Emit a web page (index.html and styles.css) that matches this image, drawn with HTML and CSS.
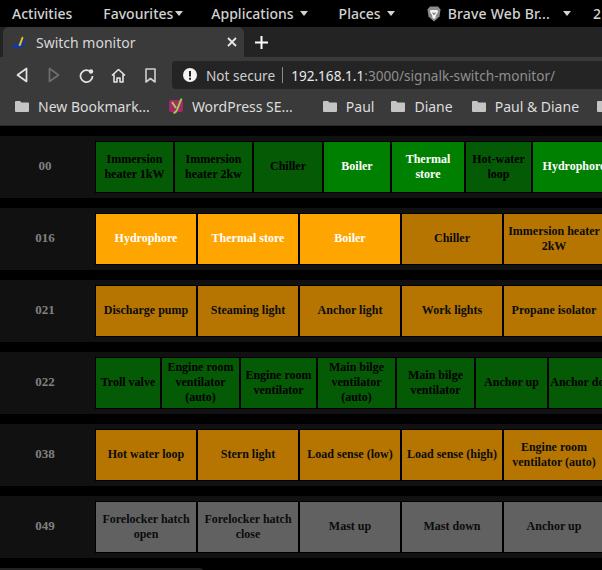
FILE: index.html
```html
<!DOCTYPE html>
<html>
<head>
  <title>Switch monitor</title>
  <link rel="stylesheet" href="styles.css">
</head>
<body>
  <div class="topbar">
    <span class="menu menu-activities">Activities</span>
    <span class="menu menu-favourites">Favourites<i class="caret caret-tight"></i></span>
    <span class="menu menu-applications">Applications<i class="caret"></i></span>
    <span class="menu menu-places">Places<i class="caret"></i></span>
    <svg class="brave" width="14" height="16" viewBox="0 0 14 16">
      <path d="M3 0.5h8l2.5 3-1 7-5.5 5-5.5-5-1-7z" fill="#8c8c8c"/>
      <path d="M3.5 4h7l0.5 2-2 3-0.5 3-1.5 1-1.5-1-0.5-3-2-3z" fill="#f2f2f2"/>
      <path d="M5 6.5h1.2l0.8 1 0.8-1h1.2l-1.4 2.2h-1.2z" fill="#777"/>
    </svg>
    <span class="menu menu-brave">Brave Web Br...<i class="caret caret-wide"></i></span>
    <span class="menu menu-clock">2</span>
  </div>

  <div class="tabstrip">
    <div class="tab">
      <svg class="favicon" width="16" height="13" viewBox="0 0 16 13">
        <path d="M0 10.500c2-2 5-3.500 8-4.500l7.500-1.500c-2 3.500-5 7-9.500 8-2.500.5-4.500 0-6-2z" fill="#123a9c"/>
        <path d="M6.500 9.500L10 .5l1.500 1-3 8.500z" fill="#f2c418"/>
      </svg>
      <span class="tab-title">Switch monitor</span>
      <svg class="tab-close" width="10" height="10" viewBox="0 0 10 10">
        <path d="M1 1l8 8M9 1l-8 8" stroke="#e8e8e8" stroke-width="1.800"/>
      </svg>
    </div>
    <svg class="tab-new" width="13" height="13" viewBox="0 0 13 13">
      <path d="M6.500 0v13M0 6.500h13" stroke="#fff" stroke-width="2"/>
    </svg>
  </div>

  <div class="toolbar">
    <svg class="nav nav-back" width="12" height="16" viewBox="0 0 12 16">
      <path d="M10.500 1.500v13L1.500 8z" fill="none" stroke="#e4e4e4" stroke-width="1.700" stroke-linejoin="round"/>
    </svg>
    <svg class="nav nav-forward" width="12" height="16" viewBox="0 0 12 16">
      <path d="M1.500 1.500v13l9-6.500z" fill="none" stroke="#6e6e6e" stroke-width="1.700" stroke-linejoin="round"/>
    </svg>
    <svg class="nav nav-reload" width="15" height="15" viewBox="0 0 15 15">
      <path d="M12.300 4.500A6 6 0 1 0 13.500 8" fill="none" stroke="#e4e4e4" stroke-width="1.700"/>
      <circle cx="12" cy="3.500" r="2.200" fill="#e4e4e4"/>
    </svg>
    <svg class="nav nav-home" width="15" height="15" viewBox="0 0 15 15">
      <path d="M1 7.500L7.500 1.500 14 7.500M3 6.500V14h3v-4h3v4h3V6.500" fill="none" stroke="#e4e4e4" stroke-width="1.600" stroke-linejoin="round"/>
    </svg>
    <svg class="nav nav-bookmark" width="11" height="15" viewBox="0 0 11 15">
      <path d="M1 1h9v13L5.500 10.500 1 14z" fill="none" stroke="#d0d0d0" stroke-width="1.600" stroke-linejoin="round"/>
    </svg>
    <div class="omnibox">
      <svg class="warn" width="14" height="14" viewBox="0 0 14 14">
        <path fill-rule="evenodd" d="M7 0a7 7 0 1 1 0 14A7 7 0 0 1 7 0zM6 3v5.500h2V3zM6 9.800v1.900h2V9.800z" fill="#f4f4f4"/>
      </svg>
      <span class="not-secure">Not secure</span>
      <span class="omni-divider"></span>
      <span class="url">192.168.1.1<span class="url-path">:3000/signalk-switch-monitor/</span></span>
    </div>
  </div>

  <div class="bookmarks">
    <svg class="folder folder-first" width="14" height="11" viewBox="0 0 14 11"><path d="M0 1a1 1 0 0 1 1-1h4l1.500 1.500H13a1 1 0 0 1 1 1V10a1 1 0 0 1-1 1H1a1 1 0 0 1-1-1z" fill="#c4c4c4"/></svg>
    <span class="mark mark-new">New Bookmark...</span>
    <svg class="yoast" width="15" height="16" viewBox="0 0 15 16">
      <rect x="0" y="2" width="14" height="12" rx="2" fill="#a4286a"/>
      <path d="M3 4l4 6M12.500 0.500L8 12c-.5 1.500-1.500 2.500-3.500 3" fill="none" stroke="#9fd24a" stroke-width="2"/>
    </svg>
    <span class="mark mark-wp">WordPress SE...</span>
    <svg class="folder folder-paul" width="14" height="11" viewBox="0 0 14 11"><path d="M0 1a1 1 0 0 1 1-1h4l1.500 1.500H13a1 1 0 0 1 1 1V10a1 1 0 0 1-1 1H1a1 1 0 0 1-1-1z" fill="#c4c4c4"/></svg>
    <span class="mark mark-paul">Paul</span>
    <svg class="folder folder-diane" width="14" height="11" viewBox="0 0 14 11"><path d="M0 1a1 1 0 0 1 1-1h4l1.500 1.500H13a1 1 0 0 1 1 1V10a1 1 0 0 1-1 1H1a1 1 0 0 1-1-1z" fill="#c4c4c4"/></svg>
    <span class="mark mark-diane">Diane</span>
    <svg class="folder folder-both" width="14" height="11" viewBox="0 0 14 11"><path d="M0 1a1 1 0 0 1 1-1h4l1.500 1.500H13a1 1 0 0 1 1 1V10a1 1 0 0 1-1 1H1a1 1 0 0 1-1-1z" fill="#c4c4c4"/></svg>
    <span class="mark mark-both">Paul &amp; Diane</span>
    <svg class="folder folder-last" width="14" height="11" viewBox="0 0 14 11"><path d="M0 1a1 1 0 0 1 1-1h4l1.500 1.500H13a1 1 0 0 1 1 1V10a1 1 0 0 1-1 1H1a1 1 0 0 1-1-1z" fill="#c4c4c4"/></svg>
  </div>

  <main class="monitor">
    <section class="device device-00">
      <div class="address">00</div>
      <div class="switches">
        <div class="switch green off">Immersion heater 1kW</div>
        <div class="switch green off">Immersion heater 2kw</div>
        <div class="switch green off">Chiller</div>
        <div class="switch green on">Boiler</div>
        <div class="switch green on">Thermal store</div>
        <div class="switch green off">Hot-water loop</div>
        <div class="switch green on">Hydrophore</div>
      </div>
    </section>
    <section class="device">
      <div class="address">016</div>
      <div class="switches">
        <div class="switch orange on">Hydrophore</div>
        <div class="switch orange on">Thermal store</div>
        <div class="switch orange on">Boiler</div>
        <div class="switch orange off">Chiller</div>
        <div class="switch orange off">Immersion heater 2kW</div>
      </div>
    </section>
    <section class="device">
      <div class="address">021</div>
      <div class="switches">
        <div class="switch orange off">Discharge pump</div>
        <div class="switch orange off">Steaming light</div>
        <div class="switch orange off">Anchor light</div>
        <div class="switch orange off">Work lights</div>
        <div class="switch orange off">Propane isolator</div>
      </div>
    </section>
    <section class="device device-022">
      <div class="address">022</div>
      <div class="switches">
        <div class="switch green off">Troll valve</div>
        <div class="switch green off">Engine room ventilator (auto)</div>
        <div class="switch green off">Engine room ventilator</div>
        <div class="switch green off">Main bilge ventilator (auto)</div>
        <div class="switch green off">Main bilge ventilator</div>
        <div class="switch green off">Anchor up</div>
        <div class="switch green off one-line">Anchor down</div>
      </div>
    </section>
    <section class="device">
      <div class="address">038</div>
      <div class="switches">
        <div class="switch orange off">Hot water loop</div>
        <div class="switch orange off">Stern light</div>
        <div class="switch orange off">Load sense (low)</div>
        <div class="switch orange off">Load sense (high)</div>
        <div class="switch orange off">Engine room ventilator (auto)</div>
      </div>
    </section>
    <section class="device">
      <div class="address">049</div>
      <div class="switches">
        <div class="switch grey off">Forelocker hatch open</div>
        <div class="switch grey off">Forelocker hatch close</div>
        <div class="switch grey off">Mast up</div>
        <div class="switch grey off">Mast down</div>
        <div class="switch grey off">Anchor up</div>
      </div>
    </section>
  </main>

  <div class="status-bubble"></div>
</body>
</html>
```

FILE: styles.css
```css
html, body {
  margin: 0;
  padding: 0;
  background-color: #000;
}

body {
  position: relative;
  display: flex;
  flex-direction: column;
  width: 602px;
  height: 570px;
  overflow: hidden;
  font-family: "Noto Sans", "Open Sans", sans-serif;
}

svg {
  display: block;
  flex: none;
}

/* desktop bar */
.topbar {
  display: flex;
  align-items: center;
  flex: none;
  height: 27px;
  white-space: nowrap;
  color: #d2d2d2;
  font-size: 14px;
  font-weight: 500;
}

.menu {
  display: flex;
  flex: none;
  align-items: center;
}

.menu-activities { margin-left: 12px; }
.menu-favourites { margin-left: 31px; }
.menu-applications { margin-left: 28px; }
.menu-places { margin-left: 31px; }
.menu-brave { margin-left: 7px; letter-spacing: 0.2px; }
.menu-clock { margin-left: 22px; }
.brave { margin-left: 32px; }

.caret {
  flex: none;
  width: 0;
  height: 0;
  margin-left: 6px;
  border-left: 4.500px solid transparent;
  border-right: 4.500px solid transparent;
  border-top: 5px solid #d2d2d2;
}

.caret-tight { margin-left: 2px; }
.caret-wide { margin-left: 13px; }

/* browser tabs */
.tabstrip {
  display: flex;
  align-items: center;
  flex: none;
  height: 30px;
  background-color: #232323;
}

.tab {
  display: flex;
  align-items: center;
  width: 241px;
  height: 30px;
  margin-left: 3px;
  background-color: #3a3a3a;
  border-radius: 6px 6px 0 0;
}

.favicon { margin-left: 9px; }

.tab-title {
  margin-left: 8px;
  color: #d8d8d8;
  font-size: 14px;
}

.tab-close { margin-left: auto; margin-right: 7px; }
.tab-new { margin-left: 11px; }

/* address row */
.toolbar {
  display: flex;
  align-items: center;
  flex: none;
  height: 32px;
  padding-top: 4px;
  box-sizing: border-box;
  background-color: #3a3a3a;
}

.nav-back { margin-left: 16px; }
.nav-forward { margin-left: 20px; }
.nav-reload { margin-left: 19px; }
.nav-home { margin-left: 17px; }
.nav-bookmark { margin-left: 19px; }

.omnibox {
  display: flex;
  align-items: center;
  flex: 1;
  height: 28px;
  margin-left: 16px;
  padding-left: 11px;
  background-color: #242424;
  border-radius: 4px 0 0 4px;
  font-size: 13.600px;
  white-space: nowrap;
}

.not-secure {
  margin-left: 9px;
  color: #cfcfcf;
}

.omni-divider {
  width: 1px;
  height: 16px;
  margin-left: 7px;
  background-color: #8a8a8a;
}

.url {
  margin-left: 8px;
  color: #e8e8e8;
}

.url-path { color: #8f8f8f; }

/* bookmarks row */
.bookmarks {
  display: flex;
  align-items: center;
  flex: none;
  height: 36px;
  padding-bottom: 2px;
  box-sizing: border-box;
  background-color: #3a3a3a;
  white-space: nowrap;
}

.mark {
  margin-left: 9px;
  color: #dcdcdc;
  font-size: 14px;
}

.folder-first { margin-left: 15px; }
.yoast { margin-left: 19px; }
.mark-wp { margin-left: 8px; }
.folder-paul { margin-left: 30px; }
.folder-diane { margin-left: 17px; }
.folder-both { margin-left: 19px; }
.folder-last { margin-left: 18px; }

/* switch rows */
.monitor {
  display: flex;
  flex-direction: column;
  gap: 10px;
  padding-top: 10px;
  border-top: 1px solid #2b2b2b;
}

.device {
  display: flex;
  align-items: center;
  height: 62px;
  background-color: #111;
  overflow: hidden;
}

.address {
  flex: none;
  width: 90px;
  padding-bottom: 2px;
  color: #808080;
  font: bold 13px "Liberation Serif", serif;
  text-align: center;
}

.switches {
  display: grid;
  flex: none;
  grid-template-columns: repeat(5, 102px);
  height: 52px;
  margin-left: 5px;
}

.device-00 .switches {
  grid-template-columns: 79px 79px 70px 68px 74px 67px 84px;
}

.device-022 .switches {
  grid-template-columns: 66px 79px 77px 79px 79px 73px 74px;
}

.switch {
  display: flex;
  align-items: center;
  justify-content: center;
  padding: 0 2px 1px;
  box-sizing: border-box;
  border: 1px solid #000;
  font: bold 12px/15px "Liberation Serif", serif;
  text-align: center;
}

.one-line { white-space: nowrap; }

.switch.on { color: #fff; }
.switch.off { color: #0c0c0c; }
.switch.green.off { color: #000; }

.switch.green.on { background-color: #008000; }
.switch.green.off { background-color: #055a05; }
.switch.orange.on { background-color: #ffa500; }
.switch.orange.off { background-color: #b57500; }
.switch.grey.off { background-color: #616161; }

/* link hover bubble, only its top edge is on screen */
.status-bubble {
  position: absolute;
  left: 0;
  bottom: -20px;
  width: 205px;
  height: 22px;
  background-color: #222;
  border-top-right-radius: 6px;
}
```
